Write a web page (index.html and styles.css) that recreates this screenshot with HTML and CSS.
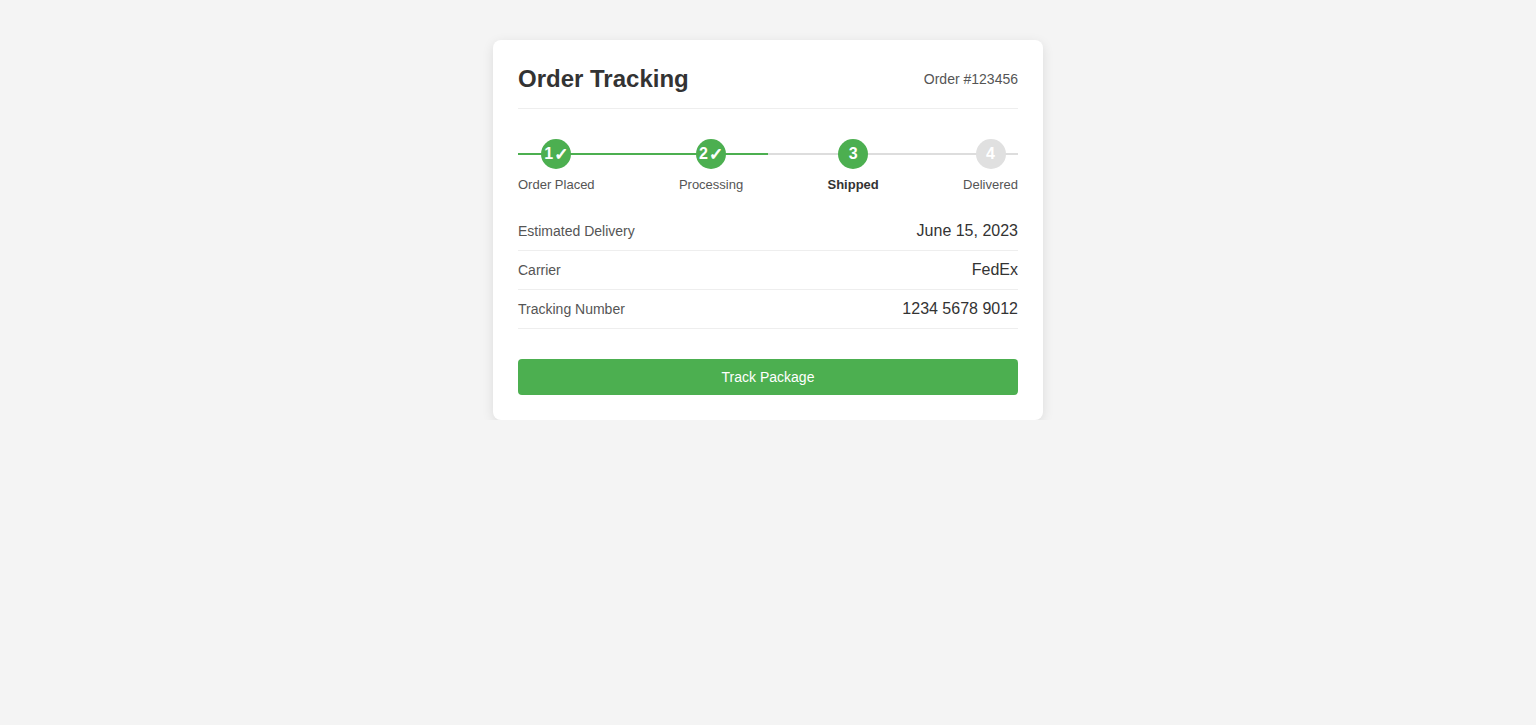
FILE: index.html
```html
<!DOCTYPE html>
<html>
<head>
<meta charset="utf-8">
<link rel="stylesheet" href="styles.css">
</head>
<body>
<div class="card">
  <div class="header">
    <h1 class="title">Order Tracking</h1>
    <span class="order-id">Order #123456</span>
  </div>
  <div class="steps">
    <div class="track"><div class="progress" style="width: 50%"></div></div>
    <div class="step done"><div class="circle">1<span class="check">✓</span></div><div class="label">Order Placed</div></div>
    <div class="step done"><div class="circle">2<span class="check">✓</span></div><div class="label">Processing</div></div>
    <div class="step active"><div class="circle">3</div><div class="label">Shipped</div></div>
    <div class="step"><div class="circle">4</div><div class="label">Delivered</div></div>
  </div>
  <div class="details">
    <div class="row"><span class="key">Estimated Delivery</span><span class="val">June 15, 2023</span></div>
    <div class="row"><span class="key">Carrier</span><span class="val">FedEx</span></div>
    <div class="row"><span class="key">Tracking Number</span><span class="val">1234 5678 9012</span></div>
  </div>
  <button class="btn">Track Package</button>
</div>
</body>
</html>
```

FILE: styles.css
```css
html, body {
  margin: 0;
  padding: 0;
}
body {
  background: #f4f4f4;
  font-family: "Liberation Sans", Arial, sans-serif;
  color: #333;
  padding-top: 40px;
}
.card {
  width: 500px;
  margin: 0 auto;
  background: #fff;
  border-radius: 8px;
  box-shadow: 0 3px 12px rgba(0,0,0,0.1);
  padding: 25px;
}
.header {
  display: flex;
  justify-content: space-between;
  align-items: center;
  padding-bottom: 15px;
  border-bottom: 1px solid #eee;
}
.title {
  margin: 0;
  font-size: 24px;
  line-height: 28px;
  font-weight: bold;
  color: #333;
}
.order-id {
  font-size: 14px;
  color: #555;
}
.steps {
  position: relative;
  display: flex;
  justify-content: space-between;
  margin-top: 30px;
}
.track {
  position: absolute;
  left: 0;
  right: 0;
  top: 14px;
  height: 2px;
  background: #ddd;
}
.progress {
  height: 100%;
  background: #4caf50;
}
.step {
  position: relative;
  display: flex;
  flex-direction: column;
  align-items: center;
}
.circle {
  width: 30px;
  height: 30px;
  border-radius: 50%;
  background: #e0e0e0;
  color: #fff;
  font-weight: bold;
  font-size: 16px;
  display: flex;
  align-items: center;
  justify-content: center;
  white-space: nowrap;
}
.check {
  font-family: "DejaVu Sans", sans-serif;
  font-weight: bold;
  font-size: 17px;
  margin-left: 1px;
  -webkit-text-stroke: 0.8px #fff;
}
.step.done .circle,
.step.active .circle {
  background: #4caf50;
}
.label {
  margin-top: 8px;
  font-size: 13px;
  line-height: 15px;
  color: #555;
}
.step.active .label {
  font-weight: bold;
  color: #333;
}
.details {
  margin-top: 20px;
}
.row {
  display: flex;
  justify-content: space-between;
  align-items: center;
  padding: 10px 0;
  border-bottom: 1px solid #eee;
  line-height: 18px;
}
.key {
  font-size: 14px;
  color: #555;
}
.val {
  font-size: 16px;
  color: #333;
}
.btn {
  display: block;
  width: 100%;
  margin-top: 30px;
  height: 36px;
  border: none;
  border-radius: 4px;
  background: #4caf50;
  color: #fff;
  font-family: "Liberation Sans", Arial, sans-serif;
  font-size: 14px;
  cursor: pointer;
}
```
